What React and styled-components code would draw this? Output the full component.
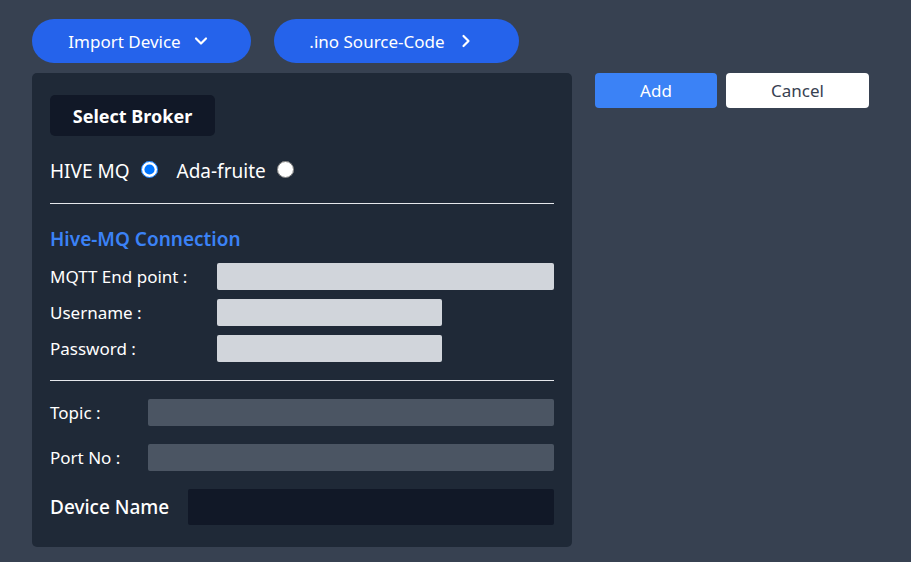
import React from 'react';
import styled, { createGlobalStyle } from 'styled-components';
import { ChevronDown, ChevronRight } from 'lucide-react';

const GlobalStyle = createGlobalStyle`
  body {
    margin: 0;
    background: #374151;
    font-family: 'Noto Sans', 'Open Sans', sans-serif;
    color: #f3f4f6;
  }
`;

const Page = styled.div`
  padding: 19px 32px;
  min-height: 562px;
  box-sizing: border-box;
`;

const TopBar = styled.div`
  display: flex;
  gap: 23px;
  margin-bottom: 10px;
`;

const PillButton = styled.button`
  display: flex;
  align-items: center;
  justify-content: center;
  gap: ${p => p.$gap}px;
  width: ${p => p.$w}px;
  height: 44px;
  border: none;
  border-radius: 22px;
  background: #2563eb;
  color: #fff;
  font-family: inherit;
  font-size: 17px;
  padding: 0 ${p => p.$padR || 0}px 0 0;
`;

const Body = styled.div`
  display: flex;
  align-items: flex-start;
  gap: 23px;
`;

const Panel = styled.div`
  width: 540px;
  box-sizing: border-box;
  background: #1f2937;
  border-radius: 5px;
  padding: 22px 18px 22px 18px;
`;

const BrokerTag = styled.div`
  display: inline-flex;
  align-items: center;
  justify-content: center;
  width: 165px;
  height: 41px;
  background: #111827;
  border-radius: 5px;
  font-weight: 700;
  font-size: 18px;
  color: #fff;
`;

const RadioRow = styled.div`
  display: flex;
  align-items: center;
  margin-top: 22px;
  font-size: 19px;
  line-height: 26px;
  color: #fff;
`;

const RadioLabel = styled.label`
  display: flex;
  align-items: center;
  margin-right: 19px;

  input {
    width: 17px;
    height: 17px;
    margin: 0 0 3px 11px;
  }
`;

const Divider = styled.hr`
  border: none;
  border-top: 1px solid #e5e7eb;
  margin: ${p => p.$top}px 0 0 0;
`;

const Heading = styled.h3`
  margin: 23px 0 12px 0;
  font-size: 19px;
  font-weight: 600;
  color: #3b82f6;
  line-height: 24px;
`;

const FieldRow = styled.div`
  display: flex;
  align-items: center;
  margin-top: ${p => p.$gap}px;
`;

const Label = styled.span`
  width: ${p => p.$w}px;
  flex-shrink: 0;
  font-size: ${p => p.$size || 17}px;
  font-weight: ${p => (p.$big ? 500 : 400)};
  color: #fff;
`;

const Field = styled.input`
  border: none;
  border-radius: 2px;
  height: ${p => p.$h || 27}px;
  width: ${p => (p.$w ? `${p.$w}px` : 'auto')};
  flex: ${p => (p.$w ? '0 0 auto' : '1')};
  background: ${p => p.$bg};
  padding: 0;
  outline: none;
`;

const Actions = styled.div`
  display: flex;
  gap: 9px;
`;

const ActionButton = styled.button`
  width: ${p => p.$w}px;
  height: 35px;
  border: none;
  border-radius: 4px;
  background: ${p => (p.$primary ? '#3b82f6' : '#fff')};
  color: ${p => (p.$primary ? '#fff' : '#374151')};
  font-family: inherit;
  font-size: 17px;
`;

export default function App() {
  return (
    <Page>
      <GlobalStyle />
      <TopBar>
        <PillButton $w={219} $padR={4} $gap={10}>
          Import Device <ChevronDown size={20} strokeWidth={2.6} />
        </PillButton>
        <PillButton $w={245} $padR={8} $gap={11}>
          .ino Source-Code <ChevronRight size={20} strokeWidth={2.6} />
        </PillButton>
      </TopBar>
      <Body>
        <Panel>
          <BrokerTag>Select Broker</BrokerTag>
          <RadioRow>
            <RadioLabel>
              HIVE MQ <input type="radio" name="broker" defaultChecked />
            </RadioLabel>
            <RadioLabel>
              Ada-fruite <input type="radio" name="broker" />
            </RadioLabel>
          </RadioRow>
          <Divider $top={19} />
          <Heading>Hive-MQ Connection</Heading>
          <FieldRow $gap={0}>
            <Label $w={167}>MQTT End point :</Label>
            <Field $bg="#d1d5db" />
          </FieldRow>
          <FieldRow $gap={9}>
            <Label $w={167}>Username :</Label>
            <Field $bg="#d1d5db" $w={225} />
          </FieldRow>
          <FieldRow $gap={9}>
            <Label $w={167}>Password :</Label>
            <Field $bg="#d1d5db" $w={225} />
          </FieldRow>
          <Divider $top={18} />
          <FieldRow $gap={18}>
            <Label $w={98}>Topic :</Label>
            <Field $bg="#4b5563" />
          </FieldRow>
          <FieldRow $gap={18}>
            <Label $w={98}>Port No :</Label>
            <Field $bg="#4b5563" />
          </FieldRow>
          <FieldRow $gap={18}>
            <Label $w={138} $size={19} $big>Device Name</Label>
            <Field $bg="#111827" $h={36} />
          </FieldRow>
        </Panel>
        <Actions>
          <ActionButton $primary $w={122}>Add</ActionButton>
          <ActionButton $w={143}>Cancel</ActionButton>
        </Actions>
      </Body>
    </Page>
  );
}
